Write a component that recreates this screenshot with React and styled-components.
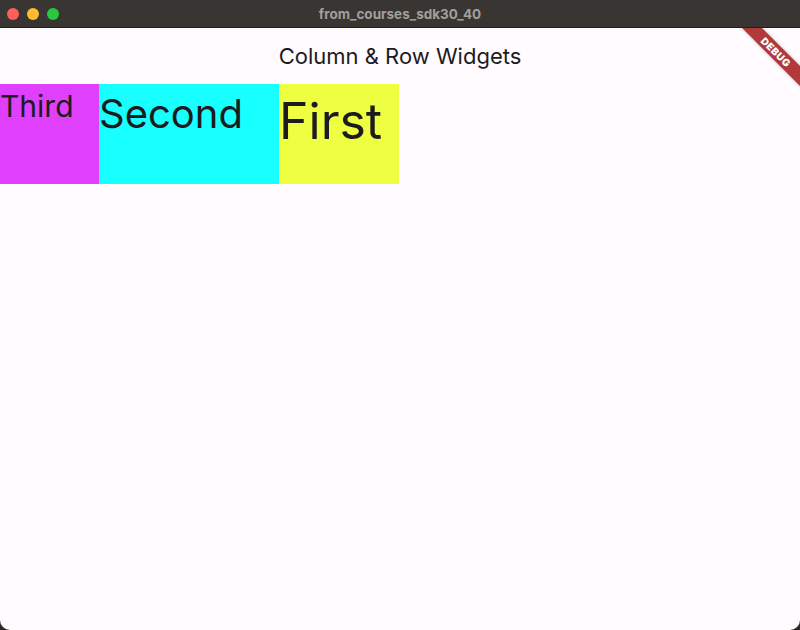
import React from 'react';
import styled, { createGlobalStyle } from 'styled-components';

const GlobalStyle = createGlobalStyle`
  html, body {
    margin: 0;
    padding: 0;
    background: #2b2928;
  }
  body {
    font-family: Inter, "Noto Sans", "Liberation Sans", sans-serif;
  }
`;

const Window = styled.div`
  width: 800px;
  height: 630px;
  display: flex;
  flex-direction: column;
  overflow: hidden;
  border-radius: 0 0 10px 10px;
  background: #fffbfe;
  position: relative;
`;

const TitleBar = styled.div`
  height: 28px;
  flex-shrink: 0;
  background: #383533;
  display: flex;
  align-items: center;
  position: relative;
  border-bottom: 1px solid #1e1d1c;
  box-sizing: border-box;
`;

const Lights = styled.div`
  display: flex;
  gap: 8px;
  padding-left: 7px;
`;

const Light = styled.span`
  width: 12px;
  height: 12px;
  border-radius: 50%;
  background: ${p => p.color};
`;

const WindowTitle = styled.div`
  position: absolute;
  left: 0;
  right: 0;
  text-align: center;
  color: #a29f9c;
  font-size: 13.5px;
  font-weight: 700;
  pointer-events: none;
`;

const AppBar = styled.header`
  height: 56px;
  flex-shrink: 0;
  display: flex;
  align-items: center;
  justify-content: center;
  font-size: 22px;
  color: #1d1b20;
`;

const Row = styled.div`
  display: flex;
  align-items: flex-start;
`;

const Block = styled.div`
  width: ${p => p.w}px;
  height: 100px;
  background: ${p => p.bg};
  color: #1d1b20;
  font-size: ${p => p.size}px;
  line-height: 1.5;
`;

const Banner = styled.div`
  position: absolute;
  top: 28px;
  right: 0;
  width: 80px;
  height: 80px;
  overflow: hidden;
  pointer-events: none;
`;

const Ribbon = styled.div`
  position: absolute;
  top: 17px;
  left: -4px;
  width: 120px;
  height: 14px;
  transform: rotate(45deg);
  background: #b2383a;
  color: #fff;
  font-size: 10px;
  font-weight: 900;
  letter-spacing: 0.5px;
  line-height: 14px;
  text-align: center;
  box-shadow: 0 0 4px rgba(0, 0, 0, 0.25);
`;

export default function App() {
  return (
    <>
      <GlobalStyle />
      <Window>
        <TitleBar>
          <Lights>
            <Light color="#fe5f57" />
            <Light color="#febc2e" />
            <Light color="#28c840" />
          </Lights>
          <WindowTitle>from_courses_sdk30_40</WindowTitle>
        </TitleBar>
        <AppBar>Column &amp; Row Widgets</AppBar>
        <Row>
          <Block w={99} bg="#e040fb" size={30}>Third</Block>
          <Block w={180} bg="#18ffff" size={40}>Second</Block>
          <Block w={120} bg="#eeff41" size={50}>First</Block>
        </Row>
        <Banner>
          <Ribbon>DEBUG</Ribbon>
        </Banner>
      </Window>
    </>
  );
}
